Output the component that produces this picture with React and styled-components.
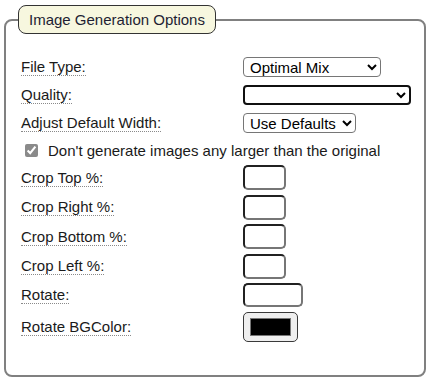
import React from 'react';
import styled, { createGlobalStyle } from 'styled-components';

const GlobalStyle = createGlobalStyle`
  body {
    margin: 0;
    background: #fff;
    font-family: "Liberation Sans", Arial, sans-serif;
  }
`;

const Page = styled.div`
  padding: 5px 1px 3px 4px;
`;

const Fieldset = styled.fieldset`
  margin: 0;
  padding: 19px 15px 31px 15px;
  border: 2px solid #808080;
  border-radius: 8px;
  min-width: 0;
`;

const Legend = styled.legend`
  margin-left: -3px;
  padding: 5px 10px;
  border: 1px solid #333;
  border-radius: 8px;
  background: #f7f7df;
  color: #1e1e33;
  font-size: 15px;
  line-height: 17px;
`;

const Row = styled.div`
  display: grid;
  grid-template-columns: 222px 1fr;
  align-items: center;
  min-height: 28px;
  padding: 2.25px 0;
  box-sizing: border-box;
`;

const Label = styled.span`
  justify-self: start;
  font-size: 15px;
  line-height: 17px;
  color: #1a1a1a;
  border-bottom: 1px dotted #8a8a8a;
  cursor: help;
`;

const Select = styled.select`
  width: ${({ $w }) => $w}px;
  height: 20px;
  box-sizing: border-box;
  font-family: "Liberation Sans", Arial, sans-serif;
  font-size: 15px;
  color: #000;
  background: #fff;
  border: ${({ $focus }) => ($focus ? '2px solid #101010' : '1px solid #767676')};
  border-radius: 4px;
  padding: 0 0 0 2px;
  outline: none;
`;

const TextBox = styled.input`
  width: ${({ $w }) => $w}px;
  height: ${({ $h }) => $h || 25}px;
  box-sizing: border-box;
  border: 2px inset #767676;
  border-radius: 5px;
  font-family: "Liberation Sans", Arial, sans-serif;
  font-size: 15px;
  padding: 1px 3px;
  outline: none;
`;

const ColorBox = styled.input`
  width: 55px;
  height: 30px;
  box-sizing: border-box;
  padding: 0;
  border: 1px solid #3a3a3a;
  border-radius: 5px;
  background: #efefef;

  &::-webkit-color-swatch-wrapper {
    padding: 5px 6px;
  }
  &::-webkit-color-swatch {
    border: 1px solid #777;
    border-radius: 0;
  }
`;

const CheckRow = styled.label`
  display: flex;
  align-items: center;
  gap: 10px;
  min-height: 26px;
  padding-left: 4px;
  font-size: 15px;
  color: #1a1a1a;
`;

const Check = styled.input`
  width: 13px;
  height: 13px;
  margin: 0;
  accent-color: #8a8a8a;
`;

const fields = [
  { label: 'Crop Top %:', w: 43 },
  { label: 'Crop Right %:', w: 43 },
  { label: 'Crop Bottom %:', w: 43 },
  { label: 'Crop Left %:', w: 43 },
  { label: 'Rotate:', w: 60, h: 24 },
];

export default function App() {
  return (
    <>
      <GlobalStyle />
      <Page>
        <Fieldset>
          <Legend>Image Generation Options</Legend>

          <Row>
            <Label>File Type:</Label>
            <Select $w={138} defaultValue="mix">
              <option value="mix">Optimal Mix</option>
              <option value="jpg">JPEG</option>
              <option value="png">PNG</option>
            </Select>
          </Row>

          <Row>
            <Label>Quality:</Label>
            <Select $w={168} $focus defaultValue="">
              <option value=""></option>
              <option value="high">High</option>
              <option value="low">Low</option>
            </Select>
          </Row>

          <Row>
            <Label>Adjust Default Width:</Label>
            <Select $w={113} defaultValue="def">
              <option value="def">Use Defaults</option>
              <option value="custom">Custom</option>
            </Select>
          </Row>

          <CheckRow>
            <Check type="checkbox" defaultChecked />
            Don't generate images any larger than the original
          </CheckRow>

          {fields.map((f) => (
            <Row key={f.label}>
              <Label>{f.label}</Label>
              <TextBox type="text" $w={f.w} $h={f.h} />
            </Row>
          ))}

          <Row>
            <Label>Rotate BGColor:</Label>
            <ColorBox type="color" defaultValue="#000000" />
          </Row>
        </Fieldset>
      </Page>
    </>
  );
}
